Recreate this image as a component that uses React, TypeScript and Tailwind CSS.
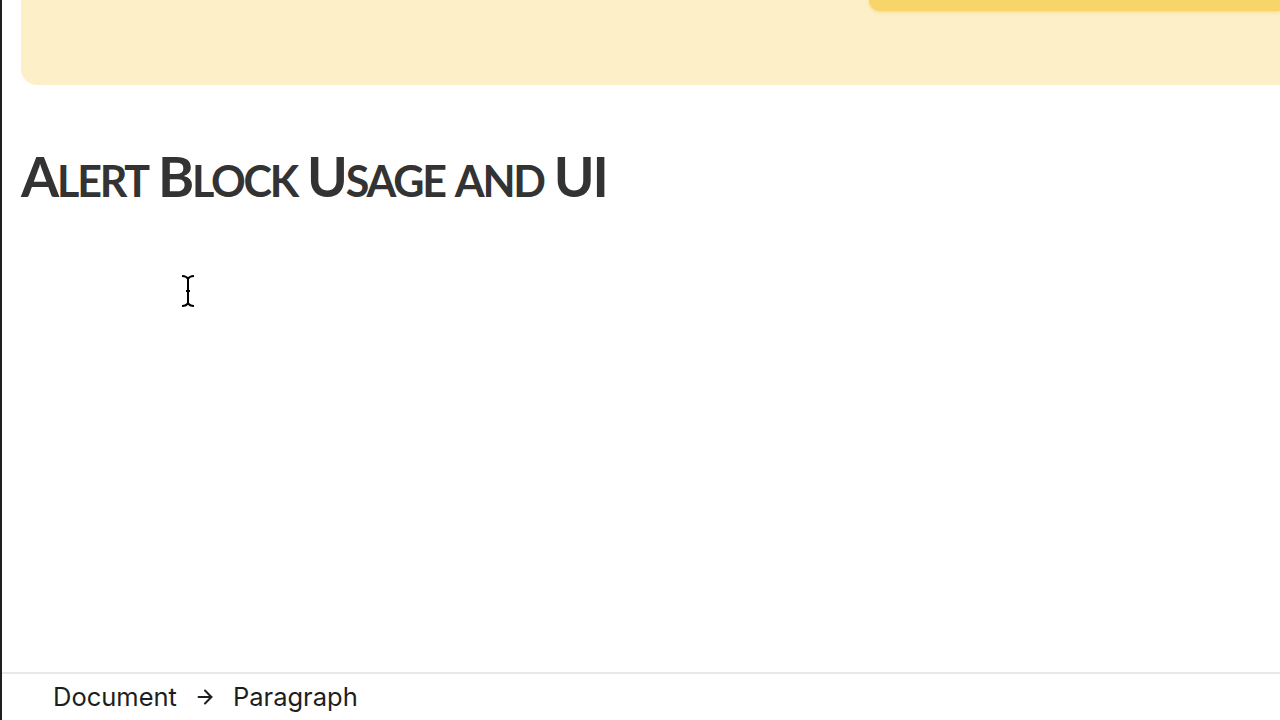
import { ArrowRight } from "lucide-react";

const titleWords = [
  ["A", "lert"],
  ["B", "lock"],
  ["U", "sage"],
  ["", "and"],
  ["UI", ""],
];

export default function App() {
  return (
    <div className="h-[720px] w-[1280px] overflow-hidden bg-white flex flex-col border-l-2 border-[#1e1e1e] relative">
      <div className="flex-1 flex flex-col pl-[19px]">
        {/* alert block */}
        <div className="h-[85px] bg-[#fdf0c9] rounded-bl-[16px] flex justify-end items-start">
          <div className="w-[411px] h-[11px] bg-[#f8d56a] rounded-bl-[12px] shadow-[0_1px_4px_rgba(240,200,90,0.6)]" />
        </div>

        <h1
          className="mt-[64px] flex items-baseline gap-[10px] text-[#333333] leading-none font-bold tracking-[-2.2px]"
          style={{ fontFamily: "Lato, 'Open Sans', sans-serif" }}
        >
          {titleWords.map(([cap, rest], i) => (
            <span key={i}>
              {cap && <span className="text-[55px]">{cap}</span>}
              {rest && <span className="text-[43px] uppercase">{rest}</span>}
            </span>
          ))}
        </h1>
      </div>

      {/* mouse cursor */}
      <svg className="absolute left-[177px] top-[274px]" width="18" height="34" viewBox="0 0 18 34">
        <path d="M3 2c3 0 5 1 6 3c1-2 3-3 6-3M9 5v24M3 32c3 0 5-1 6-3c1 2 3 3 6 3M7 17h4" fill="none" stroke="#000" strokeWidth="2" />
      </svg>

      {/* breadcrumb bar */}
      <div
        className="h-[48px] border-t-2 border-[#e8e8e8] flex items-center pl-[51px] text-[25.5px] text-[#1e1e1e]"
        style={{ fontFamily: "Inter, 'Liberation Sans', sans-serif" }}
      >
        <span>Document</span>
        <ArrowRight className="mx-[17px]" size={22} strokeWidth={2.2} />
        <span>Paragraph</span>
      </div>
    </div>
  );
}
